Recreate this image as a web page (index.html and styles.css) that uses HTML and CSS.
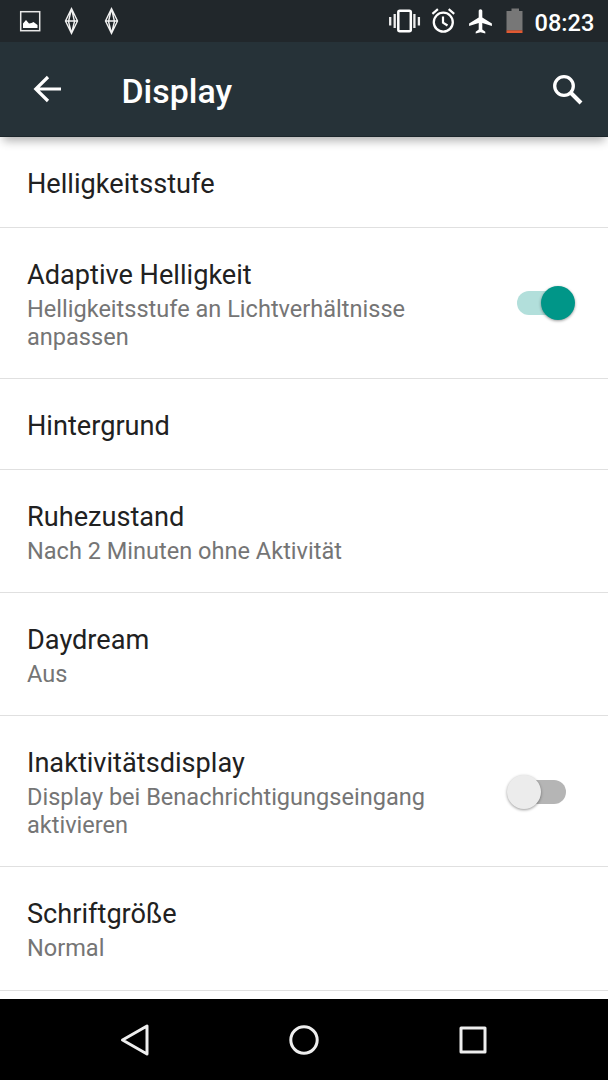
FILE: index.html
```
<!DOCTYPE html>
<html lang="de">
<head>
    <meta charset="UTF-8">
    <meta name="viewport" content="width=device-width, initial-scale=1.0">
    <title>Display</title>
    <link rel="stylesheet" href="styles.css">
</head>
<body>
    <div class="screen">
        <div class="status-bar">
            <div class="notifications">
                <svg width="40" height="42" viewBox="0 0 40 42">
                    <rect x="10.700" y="11.700" width="19" height="19" fill="none" stroke="#e8e8e8" stroke-width="1.500"/>
                    <path d="M13 28v-4.500l3-3.500 3 3.500 2.500-.5 2-1 4 3v3z" fill="#fff"/>
                </svg>
                <svg width="40" height="42" viewBox="0 0 40 42">
                    <path d="M20.500 8.500L26.500 21l-6 12.500L14.500 21zM14.500 21h12M20.500 8.500L17.500 21.500l3 12 3-12z" fill="none" stroke="#f2f2f2" stroke-width="1.400"/>
                </svg>
                <svg width="40" height="42" viewBox="0 0 40 42">
                    <path d="M20.500 8.500L26.500 21l-6 12.500L14.500 21zM14.500 21h12M20.500 8.500L17.500 21.500l3 12 3-12z" fill="none" stroke="#f2f2f2" stroke-width="1.400"/>
                </svg>
            </div>
            <div class="system-icons">
                <svg width="39" height="42" viewBox="0 0 39 42">
                    <rect x="13.300" y="10.800" width="12.500" height="20.400" rx="1.500" fill="none" stroke="#fff" stroke-width="2.500"/>
                    <path d="M9.700 14v14M29.400 14v14M5.200 17v8.500M33.900 17v8.500" stroke="#eee" stroke-width="2.300"/>
                </svg>
                <svg width="39" height="42" viewBox="0 0 39 42">
                    <circle cx="19.300" cy="22.200" r="9.500" fill="none" stroke="#fff" stroke-width="2.300"/>
                    <path d="M8.400 13.800l5.500-4.600M30.200 13.800l-5.500-4.600M19 16.500v6.200l4.500 2.800" fill="none" stroke="#fff" stroke-width="2.200"/>
                </svg>
                <svg width="35" height="42" viewBox="0 0 35 42">
                    <path transform="translate(3.100 6.800) scale(1.200)" d="M21.500 16v-2l-8-5V3.500C13.500 2.670 12.830 2 12 2s-1.500.67-1.500 1.500V9l-8 5v2l8-2.500V19l-2.500 1.800v1.500L12 21.200l4 1.100v-1.500L13.500 19v-5.500l8 2.500z" fill="#fff"/>
                </svg>
                <svg width="34" height="42" viewBox="0 0 34 42">
                    <path d="M13.500 8.500h7.500v2.500h3.500V30.500H8.500V11h5z" fill="#777"/>
                    <path d="M8.500 30.300h16V33h-16z" fill="#e05a33"/>
                </svg>
                <span class="clock">08:23</span>
            </div>
        </div>

        <div class="app-bar">
            <svg class="back" width="30" height="30" viewBox="0 0 30 30">
                <path d="M15 3L2.800 15 15 27M2.800 15H28" fill="none" stroke="#fff" stroke-width="3.200"/>
            </svg>
            <h1>Display</h1>
            <svg class="search" width="34" height="34" viewBox="0 0 34 34">
                <circle cx="13" cy="13" r="9.300" fill="none" stroke="#fff" stroke-width="3.300"/>
                <path d="M19.500 19.500l10.500 10.500" stroke="#fff" stroke-width="4"/>
            </svg>
        </div>

        <div class="settings">
            <div class="item">
                <div class="title">Helligkeitsstufe</div>
            </div>
            <div class="item">
                <div class="text">
                    <div class="title">Adaptive Helligkeit</div>
                    <div class="summary">Helligkeitsstufe an Lichtverhältnisse anpassen</div>
                </div>
                <div class="switch on"><div class="thumb"></div></div>
            </div>
            <div class="item">
                <div class="title">Hintergrund</div>
            </div>
            <div class="item">
                <div class="text">
                    <div class="title">Ruhezustand</div>
                    <div class="summary">Nach 2 Minuten ohne Aktivität</div>
                </div>
            </div>
            <div class="item">
                <div class="text">
                    <div class="title">Daydream</div>
                    <div class="summary">Aus</div>
                </div>
            </div>
            <div class="item">
                <div class="text">
                    <div class="title">Inaktivitätsdisplay</div>
                    <div class="summary">Display bei Benachrichtigungseingang aktivieren</div>
                </div>
                <div class="switch"><div class="thumb"></div></div>
            </div>
            <div class="item">
                <div class="text">
                    <div class="title">Schriftgröße</div>
                    <div class="summary">Normal</div>
                </div>
            </div>
        </div>

        <div class="nav-bar">
            <svg width="34" height="34" viewBox="0 0 34 34">
                <path d="M29 3v28L4.500 17z" fill="none" stroke="#eee" stroke-width="3" stroke-linejoin="round"/>
            </svg>
            <svg width="34" height="34" viewBox="0 0 34 34">
                <circle cx="17" cy="17" r="13.200" fill="none" stroke="#eee" stroke-width="3"/>
            </svg>
            <svg width="34" height="34" viewBox="0 0 34 34">
                <rect x="5" y="5" width="24" height="24" fill="none" stroke="#eee" stroke-width="3" stroke-linejoin="round"/>
            </svg>
        </div>
    </div>
</body>
</html>
```
FILE: styles.css
```
* { box-sizing: border-box; }
body {
    margin: 0;
    font-family: Roboto, "Liberation Sans", sans-serif;
    background: #fff;
}
svg {
    display: block;
    flex: none;
}
.screen {
    display: flex;
    flex-direction: column;
    width: 608px;
    height: 1080px;
    overflow: hidden;
}
.status-bar {
    display: flex;
    justify-content: space-between;
    height: 42px;
    padding: 0 14px 0 10px;
    background: #21272b;
}
.notifications {
    display: flex;
    gap: 0.5px;
}
.system-icons {
    display: flex;
    align-items: center;
}
.clock {
    width: 62px;
    padding: 3px 0 0 2.5px;
    font-size: 23.6px;
    font-weight: 500;
    line-height: 28px;
    color: #fff;
    white-space: nowrap;
}
.app-bar {
    display: flex;
    align-items: center;
    flex: none;
    height: 95px;
    padding: 0 24px 0 33px;
    background: #263238;
    border-bottom: 1px solid #1c262b;
    box-shadow: 0 7px 9px -3px rgba(0,0,0,0.3);
    z-index: 1;
}
.app-bar h1 {
    flex: 1;
    margin: 6px 0 0 58.5px;
    font-size: 33.9px;
    font-weight: 500;
    line-height: 40px;
    color: #fff;
}
.search {
    margin: 2px -1px 0 0;
}
.settings {
    flex: 1;
    min-height: 0;
    overflow: hidden;
}
.item {
    display: flex;
    align-items: center;
    justify-content: space-between;
    padding: 31px 33px 27px 27px;
    border-bottom: 1px solid #e0e0e0;
}
.item:last-child {
    padding-bottom: 28px;
}
.title {
    font-size: 27.15px;
    line-height: 32px;
    color: #212121;
}
.text {
    width: 440px;
}
.summary {
    padding-top: 4px;
    font-size: 23.55px;
    line-height: 28px;
    color: #757575;
}
.switch {
    position: relative;
    width: 49px;
    height: 24px;
    margin: 0 9px 3px 0;
    border-radius: 12px;
    background: #b5b5b5;
}
.thumb {
    position: absolute;
    top: -5px;
    left: -10px;
    width: 34px;
    height: 34px;
    border-radius: 50%;
    background: #ececec;
    box-shadow: 0 1px 3px rgba(0,0,0,0.4);
}
.switch.on {
    margin-bottom: 4px;
    background: #b2dfdb;
}
.switch.on .thumb {
    left: 24px;
    background: #009688;
}
.nav-bar {
    display: flex;
    align-items: center;
    justify-content: center;
    gap: 135px;
    flex: none;
    height: 81px;
    background: #000;
}
```
